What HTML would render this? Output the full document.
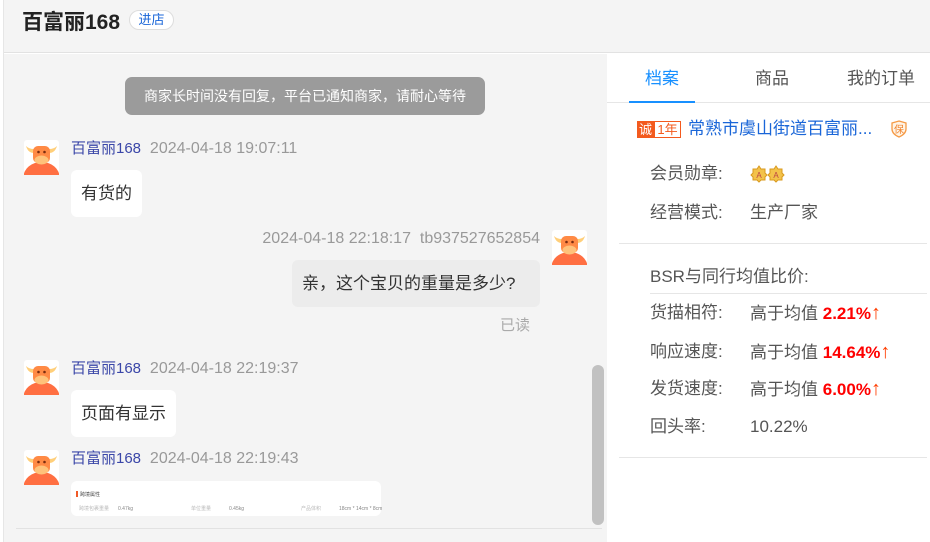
<!DOCTYPE html>
<html><head><meta charset="utf-8"><style>
*{margin:0;padding:0;box-sizing:border-box}
body{width:930px;height:542px;overflow:hidden;background:#fff;font-family:"Liberation Sans","Noto Sans CJK SC",sans-serif;position:relative}
.a{position:absolute;white-space:nowrap;line-height:22px}
.av{position:absolute;width:35px;height:35px}
.name{color:#3a46a8;font-size:15px}
.time{color:#999;font-size:16px}
.bub{position:absolute;background:#fff;border-radius:6px;font-size:17px;color:#333;padding:0 10px;line-height:47px}
.lab{font-size:17px;color:#555}
.val{font-size:17px;color:#555}
.red{color:#f00;font-weight:bold;font-size:17px}
.up{color:#ff3d00;font-weight:bold;font-size:20px}
</style></head><body>
<svg width="0" height="0" style="position:absolute"><defs>
<symbol id="bull" viewBox="0 0 35 35">
<rect x="0" y="0" width="35" height="35" rx="3" fill="#fff"/>
<ellipse cx="17.5" cy="37" rx="18" ry="15" fill="#ff6f42"/>
<path d="M2 6 Q4 13 10 13 L10 9 Q5 9 2 6Z" fill="#ffcf7a"/>
<path d="M33 6 Q31 13 25 13 L25 9 Q30 9 33 6Z" fill="#ffcf7a"/>
<rect x="9" y="6" width="17" height="17" rx="5" fill="#ff8a45"/>
<ellipse cx="17.5" cy="20" rx="7" ry="4.5" fill="#ffc27a"/>
<circle cx="14.5" cy="12" r="1.3" fill="#7a2d10"/><circle cx="20.5" cy="12" r="1.3" fill="#7a2d10"/>
</symbol></defs></svg>

<div class="a" style="left:0;top:0;width:930px;height:53px;background:#f4f4f4;border-bottom:1px solid #e2e2e2"></div>
<div class="a" style="left:0;top:0;width:3px;height:542px;background:#fff"></div>
<div class="a" style="left:3px;top:0;width:1px;height:542px;background:#e6e6e6"></div>
<div class="a" style="left:22px;top:10px;font-size:21px;font-weight:bold;color:#222;line-height:26px">百富丽168</div>
<div class="a" style="left:129px;top:10px;width:45px;height:20px;border:1px solid #ddd;border-radius:10px;background:#fff;color:#1a66d8;font-size:13px;text-align:center;line-height:18px">进店</div>

<div class="a" style="left:4px;top:54px;width:603px;height:488px;background:#f4f4f4"></div>
<div class="a" style="left:125px;top:77px;width:360px;height:38px;background:#9b9b9b;border-radius:7px;color:#fff;font-size:14px;text-align:center;line-height:38px">商家长时间没有回复，平台已通知商家，请耐心等待</div>

<svg class="av" style="left:24px;top:140px"><use href="#bull"/></svg>
<div class="a" style="left:71px;top:138px"><span class="name">百富丽168</span>&nbsp;&nbsp;<span class="time">2024-04-18 19:07:11</span></div>
<div class="bub" style="left:71px;top:170px;height:47px">有货的</div>

<svg class="av" style="left:552px;top:230px"><use href="#bull"/></svg>
<div class="a time" style="right:390px;top:228px">2024-04-18 22:18:17&nbsp;&nbsp;tb937527652854</div>
<div class="bub" style="left:292px;top:260px;height:47px;width:248px;background:#ececec;padding-left:10px">亲，这个宝贝的重量是多少?</div>
<div class="a" style="left:500px;top:315px;font-size:15px;color:#aaa">已读</div>

<svg class="av" style="left:24px;top:360px"><use href="#bull"/></svg>
<div class="a" style="left:71px;top:358px"><span class="name">百富丽168</span>&nbsp;&nbsp;<span class="time">2024-04-18 22:19:37</span></div>
<div class="bub" style="left:71px;top:390px;height:47px">页面有显示</div>

<svg class="av" style="left:24px;top:450px"><use href="#bull"/></svg>
<div class="a" style="left:71px;top:448px"><span class="name">百富丽168</span>&nbsp;&nbsp;<span class="time">2024-04-18 22:19:43</span></div>
<div class="a" style="left:71px;top:481px;width:310px;height:35px;background:#fff;border-radius:6px;font-size:5px;color:#888">
<div class="a" style="left:5px;top:10px;width:2px;height:6px;background:#f05a28"></div>
<div class="a" style="left:9px;top:3px;color:#444">跨境属性</div>
<div class="a" style="left:8px;top:17px;color:#bbb">跨境包裹重量</div><div class="a" style="left:47px;top:17px">0.47kg</div>
<div class="a" style="left:120px;top:17px;color:#bbb">单位重量</div><div class="a" style="left:158px;top:17px">0.45kg</div>
<div class="a" style="left:230px;top:17px;color:#bbb">产品体积</div><div class="a" style="left:268px;top:17px">18cm * 14cm * 8cm</div>
</div>
<div class="a" style="left:16px;top:528px;width:586px;height:1px;background:#e2e2e2"></div>
<div class="a" style="left:592px;top:365px;width:12px;height:160px;background:#c1c1c1;border-radius:6px"></div>

<div class="a" style="left:607px;top:348px;width:15px;height:36px;background:#f4f4f4;border-radius:0 4px 4px 0"></div>
<svg class="a" style="left:609px;top:359px" width="12" height="14" viewBox="0 0 12 14"><path d="M1 2 L6 7 L1 12 M5 2 L10 7 L5 12" fill="none" stroke="#888" stroke-width="1.2"/></svg>

<div class="a" style="left:607px;top:54px;width:323px;height:488px;background:#fff"></div>
<div class="a" style="left:645px;top:68px;font-size:17px;color:#1890ff">档案</div>
<div class="a" style="left:755px;top:68px;font-size:17px;color:#555">商品</div>
<div class="a" style="left:847px;top:68px;font-size:17px;color:#555">我的订单</div>
<div class="a" style="left:607px;top:102px;width:323px;height:1px;background:#e6e6e6"></div>
<div class="a" style="left:629px;top:101px;width:66px;height:2px;background:#1890ff"></div>

<div class="a" style="left:637px;top:121px;width:17px;height:17px;background:#f35a1e;color:#fff;font-size:13px;text-align:center;line-height:17px">诚</div>
<div class="a" style="left:654px;top:121px;width:27px;height:17px;border:1px solid #f35a1e;color:#f35a1e;font-size:13px;text-align:center;line-height:15px">1年</div>
<div class="a" style="left:688px;top:118px;font-size:17px;color:#1a66d8">常熟市虞山街道百富丽...</div>
<svg class="a" style="left:890px;top:120px" width="18" height="18" viewBox="0 0 18 18"><path d="M9 1 L16 3 L16 9 Q16 14 9 17 Q2 14 2 9 L2 3Z" fill="#fff4e6" stroke="#f59a45" stroke-width="1.3"/><text x="9" y="13" font-size="10" text-anchor="middle" fill="#f0822a" font-family="Noto Sans CJK SC">保</text></svg>

<div class="a lab" style="left:650px;top:163px">会员勋章:</div>
<svg class="a" style="left:750px;top:165px" width="36" height="18" viewBox="0 0 36 18"><g fill="#f3c24a" stroke="#d99a1e"><path d="M9 1 L11 4 L15 4 L15 8 L17 10 L15 12 L15 15 L11 15 L9 17 L7 15 L3 15 L3 12 L1 10 L3 8 L3 4 L7 4Z"/><path d="M26 1 L28 4 L32 4 L32 8 L34 10 L32 12 L32 15 L28 15 L26 17 L24 15 L20 15 L20 12 L18 10 L20 8 L20 4 L24 4Z"/></g><text x="9" y="13" font-size="8" text-anchor="middle" fill="#b44">A</text><text x="26" y="13" font-size="8" text-anchor="middle" fill="#b44">A</text></svg>
<div class="a lab" style="left:650px;top:202px">经营模式:</div>
<div class="a val" style="left:750px;top:202px">生产厂家</div>
<div class="a" style="left:619px;top:243px;width:308px;height:1px;background:#e6e6e6"></div>

<div class="a lab" style="left:650px;top:266px">BSR与同行均值比价:</div>
<div class="a" style="left:650px;top:293px;width:277px;height:1px;background:#e6e6e6"></div>
<div class="a lab" style="left:650px;top:302px">货描相符:</div>
<div class="a val" style="left:750px;top:302px">高于均值 <span class="red">2.21%</span><span class="up">↑</span></div>
<div class="a lab" style="left:650px;top:341px">响应速度:</div>
<div class="a val" style="left:750px;top:341px">高于均值 <span class="red">14.64%</span><span class="up">↑</span></div>
<div class="a lab" style="left:650px;top:378px">发货速度:</div>
<div class="a val" style="left:750px;top:378px">高于均值 <span class="red">6.00%</span><span class="up">↑</span></div>
<div class="a lab" style="left:650px;top:416px">回头率:</div>
<div class="a val" style="left:750px;top:416px">10.22%</div>
<div class="a" style="left:619px;top:457px;width:308px;height:1px;background:#e6e6e6"></div>
</body></html>
